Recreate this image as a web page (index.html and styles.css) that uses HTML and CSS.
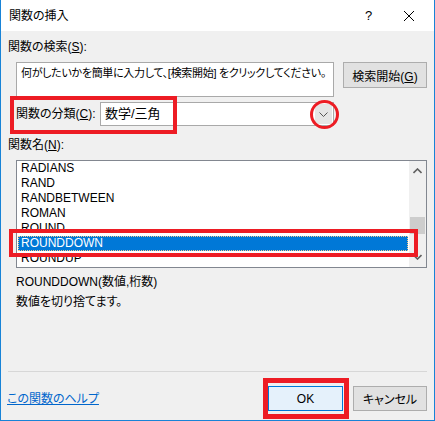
FILE: index.html
```html
<!DOCTYPE html>
<html lang="ja">
  <head>
    <meta charset="UTF-8" />
    <meta name="viewport" content="width=device-width, initial-scale=1.0" />
    <title>関数の挿入</title>
    <link rel="stylesheet" href="styles.css">
  </head>
  <body>
    <div class="window">
      <!-- タイトルバー -->
      <header class="titlebar">
        <span class="title">関数の挿入</span>
        <span class="help">?</span>
        <span class="close">
          <svg width="12" height="12" viewBox="0 0 12 12">
            <path d="M1 1 L11 11 M11 1 L1 11" stroke="#000" stroke-width="1" fill="none" />
          </svg>
        </span>
      </header>

      <!-- 本体 -->
      <main class="content">
        <p class="label first">関数の検索(<u>S</u>):</p>
        <div class="search-row">
          <div class="textbox">何がしたいかを簡単に入力して、[検索開始] をクリックしてください。</div>
          <button class="btn">検索開始(<u>G</u>)</button>
        </div>

        <div class="category-row">
          <span class="cat-label">関数の分類(<u>C</u>):</span>
          <div class="combo">
            <span class="combo-text">数学/三角</span>
            <span class="combo-drop">
              <svg width="9" height="5" viewBox="0 0 9 5">
                <path d="M0.5 0.5 L4.5 4.5 L8.5 0.5" stroke="#555" stroke-width="1" fill="none" />
              </svg>
            </span>
          </div>
        </div>

        <p class="label names">関数名(<u>N</u>):</p>
        <div class="listbox">
          <ul class="items">
            <li>RADIANS</li>
            <li>RAND</li>
            <li>RANDBETWEEN</li>
            <li>ROMAN</li>
            <li>ROUND</li>
            <li class="selected">ROUNDDOWN</li>
            <li>ROUNDUP</li>
          </ul>
          <div class="scrollbar">
            <svg class="arrow" width="9" height="6" viewBox="0 0 9 6">
              <path d="M0.5 5 L4.5 1 L8.5 5" stroke="#606060" stroke-width="1.6" fill="none" />
            </svg>
            <div class="track"><div class="thumb"></div></div>
            <svg class="arrow" width="9" height="6" viewBox="0 0 9 6">
              <path d="M0.5 1 L4.5 5 L8.5 1" stroke="#606060" stroke-width="1.6" fill="none" />
            </svg>
          </div>
        </div>

        <div class="desc">
          <p>ROUNDDOWN(数値,桁数)</p>
          <p>数値を切り捨てます。</p>
        </div>

        <hr class="separator" />

        <footer class="footer">
          <a class="help-link" href="#">この関数のヘルプ</a>
          <button class="btn ok">OK</button>
          <button class="btn cancel">キャンセル</button>
        </footer>
      </main>

      <!-- 赤い注釈 -->
      <div class="mark mark-category"></div>
      <div class="mark mark-circle"></div>
      <div class="mark mark-item"></div>
      <div class="mark mark-ok"></div>
    </div>
  </body>
</html>
```

FILE: styles.css
```css
* {
  margin: 0;
  padding: 0;
  box-sizing: border-box;
}
html,
body {
  background-color: #fff;
  font-family: "Liberation Sans", "Noto Sans CJK JP", sans-serif;
  font-size: 12px;
  color: #000;
}
ul,
li {
  list-style: none;
}
.window {
  position: relative;
  width: 435px;
  height: 421px;
  display: flex;
  flex-direction: column;
  background-color: #f0f0f0;
  border: 1px solid #1883d7;
  border-top: none;
  font-feature-settings: "palt";
}
.titlebar {
  height: 31px;
  display: flex;
  align-items: center;
  padding-left: 8px;
  background-color: #fff;
}
.title {
  line-height: 16px;
}
.help {
  margin-left: auto;
  width: 12px;
  font-size: 13px;
  line-height: 16px;
}
.close {
  display: flex;
  margin: 0 19px 0 26px;
}
.content {
  flex: 1;
  padding: 0 7px;
  display: flex;
  flex-direction: column;
}
.label {
  line-height: 16px;
}
.label.first {
  margin-top: 8px;
}
.search-row {
  margin-top: 7px;
  padding-left: 8px;
  display: flex;
  align-items: flex-start;
  gap: 9px;
}
.textbox {
  width: 318px;
  height: 35px;
  padding: 2px 4px;
  font-size: 11px;
  letter-spacing: -0.3px;
  line-height: 16px;
  background-color: #fff;
  border: 1px solid #a9a9a9;
  white-space: nowrap;
  overflow: hidden;
}
.btn {
  font: inherit;
  color: #000;
  height: 26px;
  background-color: #e1e1e1;
  border: 1px solid #adadad;
}
.search-row .btn {
  width: 84px;
}
.category-row {
  margin-top: 5px;
  padding-left: 8px;
  display: flex;
  align-items: center;
  height: 24px;
}
.cat-label {
  width: 84px;
  line-height: 16px;
}
.combo {
  width: 234px;
  height: 24px;
  display: flex;
  align-items: center;
  background-color: #fff;
  border: 1px solid #a9a9a9;
}
.combo-text {
  flex: 1;
  padding-left: 4px;
  line-height: 16px;
  font-size: 13px;
}
.combo-drop {
  width: 17px;
  height: 20px;
  margin-right: 1px;
  display: flex;
  align-items: center;
  justify-content: center;
  background-color: #e5e5e5;
}
.label.names {
  margin-top: 11px;
}
.listbox {
  margin: 7px 0 0 8px;
  height: 108px;
  display: flex;
  background-color: #fff;
  border: 1px solid #828790;
  overflow: hidden;
}
.items {
  flex: 1;
  padding: 0 1px;
}
.items li {
  height: 15px;
  line-height: 15px;
  padding-left: 3px;
}
.items li.selected {
  color: #fff;
  background-color: #0078d7;
  outline: 1px dotted #f7c98a;
  outline-offset: -1px;
}
.scrollbar {
  width: 17px;
  display: flex;
  flex-direction: column;
  align-items: center;
  background-color: #f0f0f0;
}
.arrow {
  margin: 7px 0;
  flex-shrink: 0;
}
.track {
  flex: 1;
  width: 100%;
  position: relative;
}
.thumb {
  width: 15px;
  height: 17px;
  margin: 36px auto 0;
  background-color: #cdcdcd;
}
.desc {
  margin-top: 4px;
  padding-left: 8px;
  line-height: 20px;
}
.separator {
  margin-top: 59px;
  border: none;
  border-top: 1px solid #d7d7d7;
}
.footer {
  margin-top: 14px;
  display: flex;
  align-items: center;
  gap: 10px;
}
.help-link {
  margin-left: -1px;
  margin-right: auto;
  color: #0066cc;
  text-decoration: underline;
  line-height: 16px;
}
.btn.ok {
  width: 75px;
  height: 25px;
  background-color: #e5f1fb;
  border-color: #0078d7;
}
.btn.cancel {
  width: 74px;
  height: 25px;
}
/* 赤い注釈 */
.mark {
  position: absolute;
  border: 4px solid #ed1c24;
  pointer-events: none;
}
.mark-category {
  left: 9px;
  top: 96px;
  width: 167px;
  height: 38px;
}
.mark-circle {
  left: 309px;
  top: 100px;
  width: 29px;
  height: 29px;
  border-width: 3px;
  border-radius: 50%;
}
.mark-item {
  left: 8px;
  top: 229px;
  width: 409px;
  height: 28px;
}
.mark-ok {
  left: 262px;
  top: 378px;
  width: 86px;
  height: 41px;
  border-width: 5px;
}
```
